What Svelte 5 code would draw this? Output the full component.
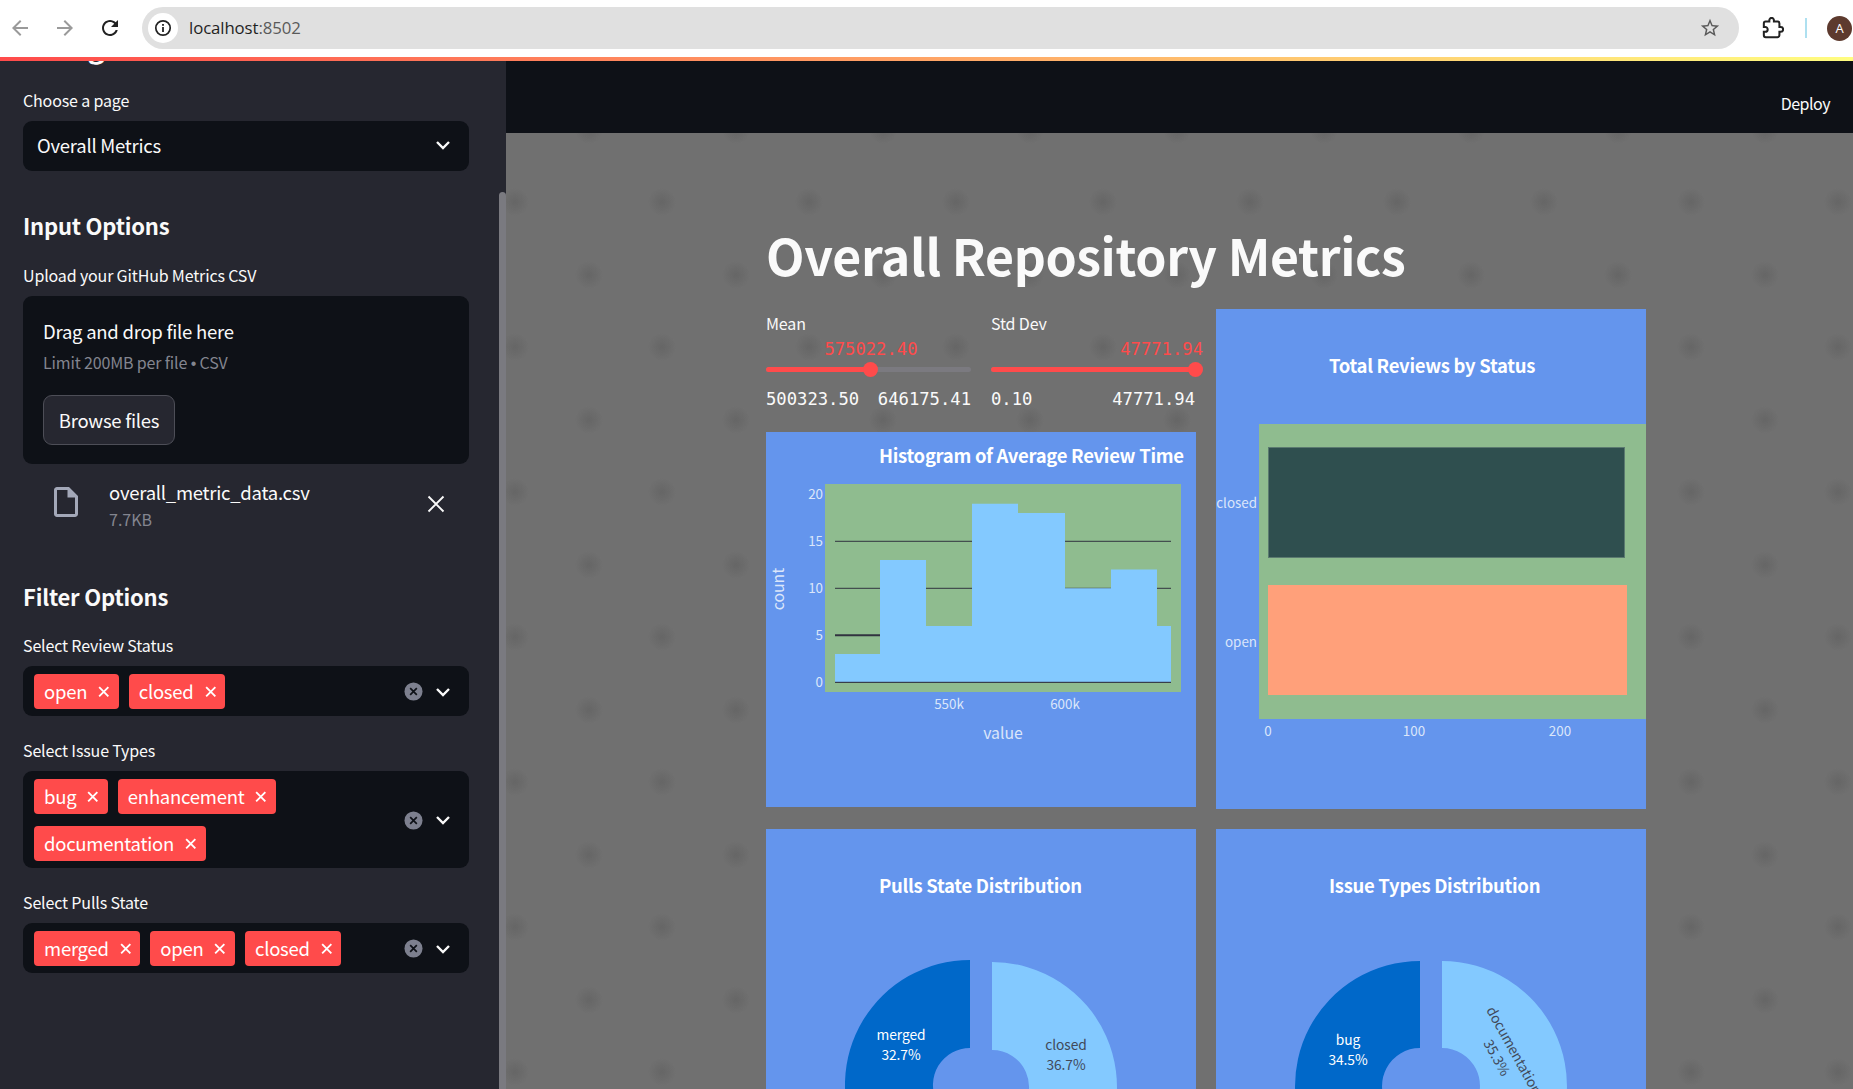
<script>
  const pages = "Overall Metrics";

  const filters = [
    { label: "Select Review Status", tags: ["open", "closed"] },
    { label: "Select Issue Types", tags: ["bug", "enhancement", "documentation"] },
    { label: "Select Pulls State", tags: ["merged", "open", "closed"] },
  ];

  const sliders = [
    { label: "Mean", value: "575022.40", min: "500323.50", max: "646175.41", pct: 51.2, width: 205 },
    { label: "Std Dev", value: "47771.94", min: "0.10", max: "47771.94", pct: 96.5, width: 212, full: true },
  ];

  // histogram, coordinates relative to the card
  const zero = 250.3;
  const unit = 9.4;
  const binX = [69, 114, 160, 206, 252, 299, 345, 391, 405];
  const counts = [3, 13, 6, 19, 18, 10, 12, 6];
  const histPath =
    `M${binX[0]} ${zero}` +
    counts.map((c, i) => `V${zero - c * unit}H${binX[i + 1]}`).join("") +
    `V${zero}Z`;
  const histTicks = [0, 5, 10, 15, 20];

  // clockwise from 12 o'clock, in degrees
  function wedge(cx, cy, R, r, a0, a1) {
    const pt = (rad, a) => {
      const t = (a * Math.PI) / 180;
      return `${(cx + rad * Math.sin(t)).toFixed(1)} ${(cy - rad * Math.cos(t)).toFixed(1)}`;
    };
    const large = Math.abs(a1 - a0) > 180 ? 1 : 0;
    const sweep = a1 > a0 ? 1 : 0;
    return `M${pt(R, a0)}A${R} ${R} 0 ${large} ${sweep} ${pt(R, a1)}L${pt(r, a1)}A${r} ${r} 0 ${large} ${1 - sweep} ${pt(r, a0)}Z`;
  }
</script>

<div class="window">
  <div class="browser">
    <svg class="nav dim" viewBox="0 0 24 24"><path d="M20 11H7.83l5.59-5.59L12 4l-8 8 8 8 1.41-1.41L7.83 13H20v-2z" /></svg>
    <svg class="nav dim" viewBox="0 0 24 24"><path d="M4 11h12.17l-5.59-5.59L12 4l8 8-8 8-1.41-1.41L16.17 13H4v-2z" /></svg>
    <svg class="nav" viewBox="0 0 24 24"><path d="M17.65 6.35C16.2 4.9 14.21 4 12 4c-4.42 0-7.99 3.58-7.99 8s3.57 8 7.99 8c3.73 0 6.84-2.55 7.73-6h-2.08c-.82 2.33-3.04 4-5.65 4-3.31 0-6-2.69-6-6s2.69-6 6-6c1.66 0 3.14.69 4.22 1.78L13 11h7V4l-2.35 2.35z" /></svg>
    <div class="omnibox">
      <span class="site-info">
        <svg width="18" height="18" viewBox="0 0 18 18">
          <circle cx="9" cy="9" r="7.2" fill="none" stroke="#222" stroke-width="1.7" />
          <rect x="8.1" y="8" width="1.8" height="5" fill="#222" />
          <rect x="8.1" y="5" width="1.8" height="1.8" fill="#222" />
        </svg>
      </span>
      <span class="url">localhost<span class="port">:8502</span></span>
      <svg class="star" viewBox="0 0 24 24"><path d="M22 9.24l-7.19-.62L12 2 9.19 8.63 2 9.24l5.46 4.73L5.82 21 12 17.27 18.18 21l-1.63-7.03L22 9.24zM12 15.4l-3.76 2.27 1-4.28-3.32-2.88 4.38-.38L12 6.1l1.71 4.04 4.38.38-3.32 2.88 1 4.28L12 15.4z" /></svg>
    </div>
    <svg class="puzzle" viewBox="0 0 24 24"><path d="M20.5 11H19V7c0-1.1-.9-2-2-2h-4V3.5C13 2.12 11.88 1 10.5 1S8 2.12 8 3.5V5H4c-1.1 0-1.99.9-1.99 2v3.8H3.5c1.49 0 2.7 1.21 2.7 2.7s-1.21 2.7-2.7 2.7H2V20c0 1.1.9 2 2 2h13c1.1 0 2-.9 2-2v-4h1.5c1.38 0 2.5-1.12 2.5-2.5S21.88 11 20.5 11z" /></svg>
    <span class="sep"></span>
    <span class="avatar">A</span>
  </div>
  <div class="stripe"></div>

  <div class="page">
    <aside class="sidebar">
      <h1 class="nav-title">Navigation</h1>
      <label class="lbl">Choose a page</label>
      <div class="select single">
        <span>{pages}</span>
        <svg class="chev" viewBox="0 0 16 10"><path d="M2 2l6 6 6-6" /></svg>
      </div>

      <h2 class="input-head">Input Options</h2>
      <label class="lbl upload-lbl">Upload your GitHub Metrics CSV</label>
      <div class="dropzone">
        <div class="drag">Drag and drop file here</div>
        <div class="limit">Limit 200MB per file <span class="dot">•</span> CSV</div>
        <button class="browse">Browse files</button>
      </div>
      <div class="file">
        <svg class="doc" viewBox="0 0 24 24"><path d="M14 2H6c-1.1 0-1.99.9-1.99 2L4 20c0 1.1.89 2 1.99 2H18c1.1 0 2-.9 2-2V8l-6-6zM6 20V4h7v5h5v11H6z" /></svg>
        <div class="file-text">
          <div class="fname">overall_metric_data.csv</div>
          <div class="fsize">7.7KB</div>
        </div>
        <svg class="file-x" viewBox="0 0 16 16"><path d="M2 2l12 12M14 2L2 14" /></svg>
      </div>

      <h2 class="filter-head">Filter Options</h2>
      {#each filters as f}
        <div class="field">
          <label class="lbl">{f.label}</label>
          <div class="select multi">
            <div class="tags">
              {#each f.tags as t}
                <span class="tag">{t}<svg viewBox="0 0 10 10"><path d="M1 1l8 8M9 1L1 9" /></svg></span>
              {/each}
            </div>
            <svg class="clear" viewBox="0 0 20 20">
              <circle cx="10" cy="10" r="9.5" fill="#7d808f" />
              <path d="M6.5 6.5l7 7M13.5 6.5l-7 7" stroke="#0e1117" stroke-width="1.8" />
            </svg>
            <svg class="chev" viewBox="0 0 16 10"><path d="M2 2l6 6 6-6" /></svg>
          </div>
        </div>
      {/each}

      <div class="scrollbar"></div>
    </aside>

    <main class="main">
      <header class="topbar"><span class="deploy">Deploy</span></header>
      <section class="content">
        <h1 class="title">Overall Repository Metrics</h1>
        <div class="grid">
          <div class="left">
            <div class="sliders">
              {#each sliders as s}
                <div class="slider" class:full={s.full} style="width:{s.width}px">
                  <div class="s-label">{s.label}</div>
                  <div class="s-value-row">
                    <span class="s-value" style="left:{s.pct}%">{s.value}</span>
                  </div>
                  <div class="track">
                    <div class="fill" style="width:{s.pct}%"></div>
                    <div class="thumb" style="left:{s.pct}%"></div>
                  </div>
                  <div class="minmax"><span>{s.min}</span><span>{s.max}</span></div>
                </div>
              {/each}
            </div>

            <div class="card hist">
              <svg viewBox="0 0 430 375">
                <text class="ctitle" x="113" y="31">Histogram of Average Review Time</text>
                <rect x="59" y="52" width="356" height="208" fill="#8fbc8f" />
                {#each histTicks as t}
                  <text class="tick" text-anchor="end" x="57" y={zero + 5 - t * unit}>{t}</text>
                  {#if t < 20}
                    <line x1="69" x2="405" y1={zero - t * unit} y2={zero - t * unit} stroke="#31333f" stroke-width={t === 5 ? 2 : 1} />
                  {/if}
                {/each}
                <path d={histPath} fill="#83c9ff" />
                <line x1="69" x2="405" y1={zero} y2={zero} stroke="#31333f" stroke-width="1" />
                <text class="tick" text-anchor="middle" x="183" y="277">550k</text>
                <text class="tick" text-anchor="middle" x="299" y="277">600k</text>
                <text class="axis" text-anchor="middle" x="237" y="307">value</text>
                <text class="axis" text-anchor="middle" transform="translate(18 157) rotate(-90)">count</text>
              </svg>
            </div>
          </div>

          <div class="card status">
            <svg viewBox="0 0 430 500">
              <text class="ctitle" x="113" y="64">Total Reviews by Status</text>
              <rect x="43" y="115" width="387" height="295" fill="#8fbc8f" />
              <rect x="52.5" y="138.5" width="356" height="110" fill="#2f4f4f" stroke="#5b7a70" />
              <rect x="52" y="276" width="359" height="110" fill="#ffa07a" />
              <text class="tick" text-anchor="end" x="41" y="199">closed</text>
              <text class="tick" text-anchor="end" x="41" y="338">open</text>
              <text class="tick" text-anchor="middle" x="52" y="427">0</text>
              <text class="tick" text-anchor="middle" x="198" y="427">100</text>
              <text class="tick" text-anchor="middle" x="344" y="427">200</text>
            </svg>
          </div>

          <div class="card pie">
            <svg viewBox="0 0 430 400">
              <text class="ctitle" x="113" y="64">Pulls State Distribution</text>
              <path d={wedge(204, 256, 125, 37, 0, -117.7)} fill="#0068c9" />
              <path d={wedge(226, 258, 125, 37, 0, 132)} fill="#83c9ff" />
              <text class="slice" text-anchor="middle" x="135" y="211">merged</text>
              <text class="slice" text-anchor="middle" x="135" y="231">32.7%</text>
              <text class="slice dark" text-anchor="middle" x="300" y="221">closed</text>
              <text class="slice dark" text-anchor="middle" x="300" y="241">36.7%</text>
            </svg>
          </div>

          <div class="card pie">
            <svg viewBox="0 0 430 400">
              <text class="ctitle" x="113" y="64">Issue Types Distribution</text>
              <path d={wedge(204, 257, 125, 38, 0, -124)} fill="#0068c9" />
              <path d={wedge(226, 257, 125, 38, 0, 127)} fill="#83c9ff" />
              <text class="slice" text-anchor="middle" x="132" y="216">bug</text>
              <text class="slice" text-anchor="middle" x="132" y="236">34.5%</text>
              <text class="slice dark" transform="translate(270 181) rotate(61)">documentation</text>
              <text class="slice dark" transform="translate(267 214) rotate(61)">35.3%</text>
            </svg>
          </div>
        </div>
      </section>
    </main>
  </div>
</div>

<style>
  :global(body) {
    margin: 0;
    background: #707070;
  }

  .window {
    width: 1853px;
    height: 1089px;
    overflow: hidden;
    display: flex;
    flex-direction: column;
    font-family: "Noto Sans CJK SC", "Noto Sans", sans-serif;
    color: #fafafa;
  }

  /* browser chrome */
  .browser {
    height: 57px;
    flex: none;
    background: #fff;
    display: flex;
    align-items: center;
    padding-left: 8px;
    padding-bottom: 1px;
    box-sizing: border-box;
  }
  .nav {
    width: 24px;
    height: 24px;
    margin-right: 21px;
    fill: #222;
  }
  .nav.dim {
    fill: #9a9a9a;
  }
  .omnibox {
    margin-left: -1px;
    width: 1597px;
    height: 42px;
    border-radius: 21px;
    background: #e0e0e0;
    display: flex;
    align-items: center;
    padding: 0 5px 0 6px;
    box-sizing: border-box;
  }
  .site-info {
    width: 30px;
    height: 30px;
    border-radius: 50%;
    background: #fff;
    display: flex;
    align-items: center;
    justify-content: center;
  }
  .url {
    margin-left: 11px;
    font-family: "Open Sans", sans-serif;
    font-size: 16.8px;
    line-height: 22px;
    letter-spacing: -0.1px;
    color: #1f1f1f;
  }
  .port {
    color: #5a5a5a;
  }
  .star {
    width: 22px;
    height: 22px;
    margin-left: auto;
    margin-right: 13px;
    fill: #5a5a5a;
  }
  .puzzle {
    width: 22px;
    height: 22px;
    margin-left: 23px;
    fill: none;
    stroke: #222;
    stroke-width: 2.2;
  }
  .sep {
    width: 2px;
    height: 20px;
    margin-left: 21px;
    background: #aee0f0;
  }
  .avatar {
    width: 25px;
    height: 25px;
    margin-left: 20px;
    flex: none;
    border-radius: 50%;
    background: #5d3a2e;
    color: #fff;
    font-family: "Open Sans", sans-serif;
    font-size: 13px;
    line-height: 25px;
    text-align: center;
  }
  .stripe {
    height: 4px;
    flex: none;
    background: linear-gradient(90deg, #ff4b4b, #fffd80);
  }

  .page {
    flex: 1;
    min-height: 0;
    display: flex;
  }

  /* sidebar */
  .sidebar {
    position: relative;
    width: 506px;
    flex: none;
    box-sizing: border-box;
    padding-left: 23px;
    padding-right: 37px;
    background: #262730;
    overflow: hidden;
  }
  .nav-title {
    margin: -35px 0 27px;
    font-size: 29px;
    line-height: 38px;
    font-weight: 700;
  }
  .lbl {
    display: block;
    height: 19px;
    margin-bottom: 11px;
    font-size: 16px;
    line-height: 19px;
    letter-spacing: -0.15px;
  }
  .select {
    display: flex;
    align-items: center;
    box-sizing: border-box;
    background: #0e1117;
    border-radius: 9px;
    min-height: 50px;
    font-size: 18.5px;
    letter-spacing: -0.25px;
  }
  .select.single {
    justify-content: space-between;
    padding: 0 18px 2px 14px;
  }
  .chev {
    width: 16px;
    height: 10px;
    flex: none;
    fill: none;
    stroke: #fafafa;
    stroke-width: 2.4;
  }
  h2 {
    margin: 0;
    font-size: 22px;
    line-height: 30px;
    font-weight: 600;
    letter-spacing: -0.2px;
  }
  .input-head {
    margin-top: 39px;
  }
  .upload-lbl {
    margin-top: 26px;
  }
  .dropzone {
    height: 168px;
    box-sizing: border-box;
    padding: 22px 20px 0;
    background: #0e1117;
    border-radius: 9px;
  }
  .drag {
    font-size: 18.5px;
    line-height: 26px;
    letter-spacing: -0.25px;
  }
  .limit {
    margin-top: 6px;
    font-size: 16px;
    line-height: 24px;
    letter-spacing: -0.15px;
    color: #83858f;
  }
  .dot {
    font-family: "Liberation Sans", sans-serif;
  }
  .browse {
    display: block;
    margin-top: 19px;
    width: 132px;
    height: 50px;
    padding: 0;
    background: #262730;
    border: 1px solid #4d4e57;
    border-radius: 9px;
    color: #fafafa;
    font-family: inherit;
    font-size: 18.5px;
    letter-spacing: -0.25px;
  }
  .file {
    display: flex;
    align-items: flex-start;
    height: 117px;
    box-sizing: border-box;
    padding-top: 16px;
    padding-left: 25px;
  }
  .doc {
    width: 36px;
    height: 36px;
    margin-top: 4px;
    flex: none;
    fill: #a3a8b8;
  }
  .file-text {
    margin-left: 25px;
  }
  .fname {
    font-size: 18.5px;
    line-height: 24px;
    letter-spacing: -0.25px;
  }
  .fsize {
    margin-top: 3px;
    font-size: 16px;
    line-height: 24px;
    color: #83858f;
  }
  .file-x {
    width: 20px;
    height: 20px;
    margin-left: auto;
    margin-right: 23px;
    margin-top: 14px;
    fill: none;
    stroke: #fafafa;
    stroke-width: 1.5;
  }
  .filter-head {
    margin-bottom: 25px;
  }
  .field {
    margin-bottom: 25px;
  }
  .select.multi {
    padding: 8px 18px 7px 11px;
  }
  .tags {
    flex: 1;
    display: flex;
    flex-wrap: wrap;
    gap: 12px 10px;
  }
  .tag {
    display: inline-flex;
    align-items: center;
    height: 35px;
    padding: 0 9px 0 10px;
    background: #ff4b4b;
    border-radius: 4px;
    line-height: 35px;
    color: #fff;
  }
  .tag svg {
    width: 11.5px;
    height: 11.5px;
    margin-left: 11px;
    fill: none;
    stroke: #fff;
    stroke-width: 1.6;
  }
  .clear {
    width: 19px;
    height: 19px;
    flex: none;
    margin-right: 12.5px;
  }
  .scrollbar {
    position: absolute;
    right: 0;
    top: 131px;
    bottom: 0;
    width: 7px;
    background: #7a7a80;
    border-radius: 4px 4px 0 0;
  }

  /* main */
  .main {
    flex: 1;
    min-width: 0;
    display: flex;
    flex-direction: column;
    background-color: #707070;
    background-image:
      radial-gradient(circle 14px at 14px 14px, rgba(60, 60, 60, 0.2), transparent),
      radial-gradient(circle 14px at 14px 14px, rgba(60, 60, 60, 0.2), transparent);
    background-size: 147px 145px;
    background-repeat: repeat;
    background-position: 69px 55px, 142px 127px;
  }
  .topbar {
    height: 72px;
    flex: none;
    background: #0e1117;
    display: flex;
    align-items: center;
    justify-content: flex-end;
    padding-right: 23px;
  }
  .deploy {
    font-size: 16px;
    line-height: 24px;
    letter-spacing: -0.5px;
    margin-top: 11px;
  }
  .content {
    padding: 89px 0 0 260px;
    width: 880px;
  }
  .title {
    margin: 0 0 23px;
    font-size: 50px;
    line-height: 64px;
    font-weight: 700;
    letter-spacing: -0.35px;
    white-space: nowrap;
  }
  .grid {
    display: grid;
    grid-template-columns: 430px 430px;
    gap: 20px;
    align-items: start;
  }
  .sliders {
    display: flex;
    gap: 20px;
    padding-top: 3px;
    margin-bottom: 21px;
  }
  .slider {
    flex: none;
  }
  .s-label {
    font-size: 16px;
    line-height: 22px;
    letter-spacing: -0.15px;
  }
  .s-value-row {
    position: relative;
    height: 24px;
    margin-top: 3px;
  }
  .s-value {
    position: absolute;
    top: 0;
    transform: translateX(-50%);
    font-family: "DejaVu Sans Mono", "Liberation Mono", monospace;
    font-size: 17.2px;
    line-height: 24px;
    color: #ff4b4b;
    white-space: nowrap;
  }
  .slider.full .s-value {
    left: auto !important;
    right: 0;
    transform: none;
  }
  .track {
    position: relative;
    height: 5px;
    margin-top: 6px;
    border-radius: 3px;
    background: #7b7a80;
  }
  .fill {
    height: 5px;
    border-radius: 3px;
    background: #ff4b4b;
  }
  .thumb {
    position: absolute;
    top: -5px;
    width: 15px;
    height: 15px;
    margin-left: -7.5px;
    border-radius: 50%;
    background: #ff4b4b;
  }
  .minmax {
    display: flex;
    justify-content: space-between;
    margin-top: 15px;
    font-family: "DejaVu Sans Mono", "Liberation Mono", monospace;
    font-size: 17.2px;
    line-height: 24px;
    color: #fafafa;
  }
  .slider.full .minmax {
    padding-right: 8px;
  }

  .card {
    background: #6495ed;
    overflow: hidden;
  }
  .card svg {
    display: block;
    width: 430px;
  }
  .hist {
    height: 375px;
  }
  .status {
    height: 500px;
  }
  .pie {
    height: 400px;
  }
  .ctitle {
    font-size: 18.5px;
    font-weight: 700;
    letter-spacing: -0.3px;
    fill: #fff;
  }
  .tick {
    font-size: 13.4px;
    fill: #dbe6fa;
  }
  .axis {
    font-size: 15.8px;
    fill: #dbe6fa;
  }
  .slice {
    font-size: 13.8px;
    letter-spacing: -0.1px;
    fill: #fff;
  }
  .slice.dark {
    fill: #41495a;
  }
</style>
